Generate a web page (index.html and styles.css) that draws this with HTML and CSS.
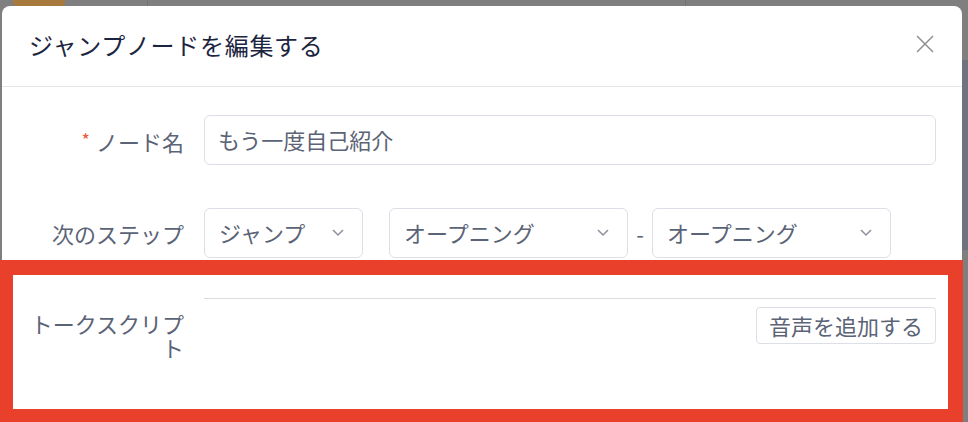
FILE: index.html
```html
<!DOCTYPE html>
<html lang="ja">
<head>
<meta charset="utf-8">
<title>ジャンプノードを編集する</title>
<link rel="stylesheet" href="styles.css">
</head>
<body>
<div class="page">
  <div class="bg-chip"></div>
  <div class="bg-line bg-line-a"></div>
  <div class="bg-line bg-line-b"></div>
  <div class="bg-side"></div>

  <div class="modal">
    <div class="modal-header">
      <h1 class="modal-title">ジャンプノードを編集する</h1>
      <svg class="close" width="20" height="20" viewBox="0 0 20 20">
        <path d="M2 2 L18 18 M18 2 L2 18" stroke="#8e8e8e" stroke-width="1.5" fill="none"/>
      </svg>
    </div>
    <div class="modal-body">
      <div class="form-row">
        <label class="form-label"><span class="req">*</span>ノード名</label>
        <div class="form-control">
          <div class="input">もう一度自己紹介</div>
        </div>
      </div>
      <div class="form-row row-gap">
        <label class="form-label">次のステップ</label>
        <div class="form-control selects">
          <div class="select select-sm"><span>ジャンプ</span>
            <svg class="chev" width="14" height="9" viewBox="0 0 14 9"><path d="M2 2 L7 7 L12 2" stroke="#8b909a" stroke-width="1.5" fill="none"/></svg>
          </div>
          <div class="select select-lg ml"><span>オープニング</span>
            <svg class="chev" width="14" height="9" viewBox="0 0 14 9"><path d="M2 2 L7 7 L12 2" stroke="#8b909a" stroke-width="1.5" fill="none"/></svg>
          </div>
          <span class="dash">-</span>
          <div class="select select-lg"><span>オープニング</span>
            <svg class="chev" width="14" height="9" viewBox="0 0 14 9"><path d="M2 2 L7 7 L12 2" stroke="#8b909a" stroke-width="1.5" fill="none"/></svg>
          </div>
        </div>
      </div>
      <div class="form-row script-row">
        <label class="form-label script-label">トークスクリプト</label>
        <div class="form-control script-box">
          <button class="btn">音声を追加する</button>
        </div>
      </div>
    </div>
  </div>

  <div class="highlight"></div>
</div>
</body>
</html>
```
FILE: styles.css
```css
* { box-sizing: border-box; }
html, body { margin: 0; padding: 0; }
body {
  font-family: "Noto Sans CJK JP", "Noto Sans", sans-serif;
  background: #7f7f7f;
}
.page {
  position: relative;
  width: 968px;
  height: 422px;
  overflow: hidden;
  background: #7f7f7f;
}
.bg-chip {
  position: absolute;
  left: 13px;
  top: -10px;
  width: 52px;
  height: 16px;
  border-radius: 4px;
  background: #a87a3e;
}
.bg-line {
  position: absolute;
  top: 0;
  width: 1px;
  height: 8px;
  background: #6d717c;
}
.bg-line-a { left: 147px; }
.bg-line-b { left: 685px; }
.bg-side {
  position: absolute;
  right: 0;
  top: 60px;
  width: 6px;
  height: 190px;
  background: #6f737e;
}
.modal {
  position: relative;
  margin: 6px 0 0 2px;
  width: 960px;
  height: 420px;
  background: #fff;
  border-radius: 8px 8px 0 0;
}
.modal-header {
  height: 81px;
  padding: 0 28px 4px 27px;
  display: flex;
  align-items: center;
  justify-content: space-between;
  border-bottom: 1px solid #e6e6e6;
}
.modal-title {
  margin: 0;
  font-size: 24px;
  font-weight: 400;
  color: #1c2540;
  letter-spacing: 0.7px;
}
.close { display: block; margin-right: -1px; }
.modal-body {
  padding: 28px 26px 0 27px;
}
.form-row {
  display: flex;
  align-items: center;
}
.row-gap { margin-top: 43px; }
.form-label {
  width: 175px;
  flex: none;
  padding-right: 20px;
  text-align: right;
  font-size: 22px;
  color: #5b6376;
  line-height: 24px;
}
.req {
  color: #ee5a36;
  font-size: 18px;
  margin-right: 6px;
  vertical-align: 4px;
}
.form-control { flex: 1; }
.input {
  height: 50px;
  border: 1px solid #dcdfe6;
  border-radius: 6px;
  padding: 0 13px 2px;
  display: flex;
  align-items: center;
  font-size: 22px;
  color: #5b6376;
}
.selects {
  display: flex;
  align-items: center;
}
.select {
  height: 50px;
  border: 1px solid #dcdfe6;
  border-radius: 6px;
  padding: 0 17px 2px 14px;
  display: flex;
  align-items: center;
  justify-content: space-between;
  font-size: 22px;
  color: #5b6376;
}
.select-sm { width: 159px; }
.select-lg { width: 239px; }
.ml { margin-left: 26px; }
.dash {
  width: 24px;
  text-align: center;
  font-size: 22px;
  color: #5b6376;
}
.script-row {
  margin-top: 40px;
  align-items: flex-start;
}
.script-label {
  padding-top: 13px;
  padding-left: 0;
  margin-left: -3px;
  width: 178px;
}
.script-box {
  border-top: 1px solid #dcdcdc;
  padding-top: 8px;
  display: flex;
  justify-content: flex-end;
}
.btn {
  height: 37px;
  padding: 0 12px 2px;
  border: 1px solid #dcdfe6;
  border-radius: 4px;
  background: #fff;
  font-family: inherit;
  font-size: 22px;
  line-height: 1;
  color: #5b6376;
}
.highlight {
  position: absolute;
  left: 0;
  top: 260px;
  width: 963px;
  height: 162px;
  border-style: solid;
  border-color: #e8402a;
  border-width: 15px 15px 13px 13px;
}
```
